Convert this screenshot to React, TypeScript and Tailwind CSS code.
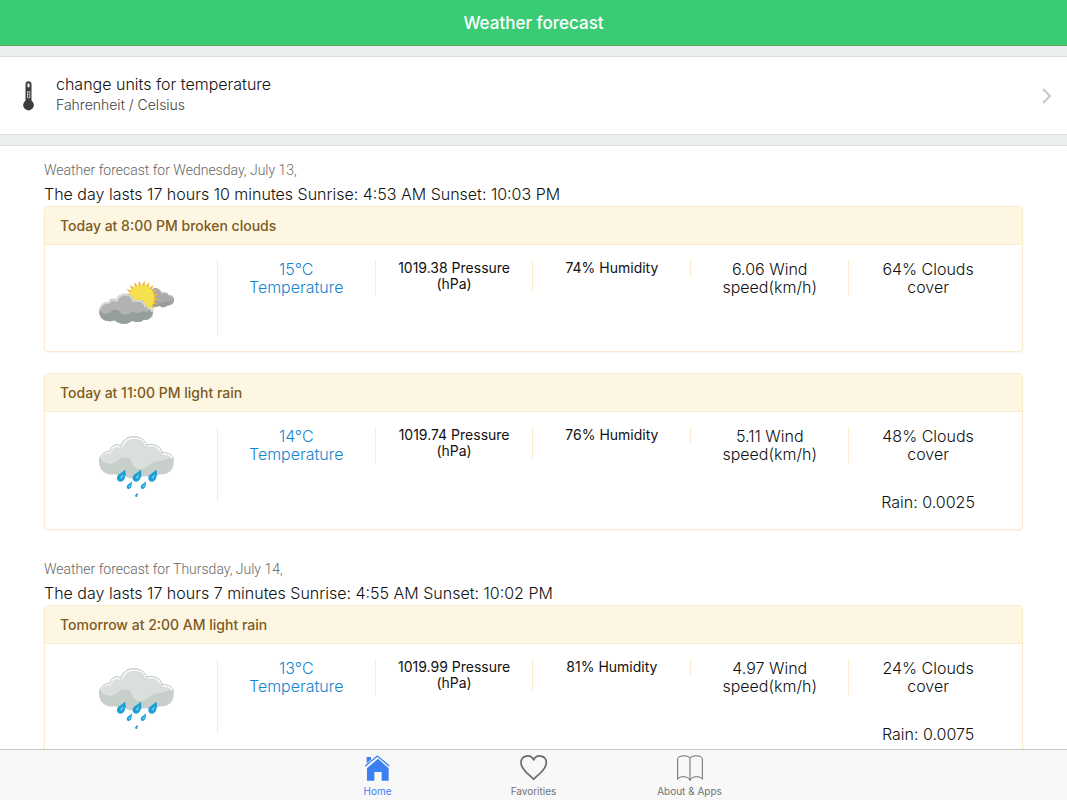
import type { ReactNode } from "react";

interface Forecast {
  title: string;
  icon: "sun" | "rain";
  temperature: string;
  pressure: string;
  humidity: string;
  wind: string;
  clouds: string;
  rain?: string;
}

interface Day {
  date: string;
  summary: string;
  forecasts: Forecast[];
}

const days: Day[] = [
  {
    date: "Wednesday, July 13,",
    summary: "The day lasts 17 hours 10 minutes Sunrise: 4:53 AM Sunset: 10:03 PM",
    forecasts: [
      {
        title: "Today at 8:00 PM broken clouds",
        icon: "sun",
        temperature: "15°C",
        pressure: "1019.38",
        humidity: "74%",
        wind: "6.06",
        clouds: "64%",
      },
      {
        title: "Today at 11:00 PM light rain",
        icon: "rain",
        temperature: "14°C",
        pressure: "1019.74",
        humidity: "76%",
        wind: "5.11",
        clouds: "48%",
        rain: "0.0025",
      },
    ],
  },
  {
    date: "Thursday, July 14,",
    summary: "The day lasts 17 hours 7 minutes Sunrise: 4:55 AM Sunset: 10:02 PM",
    forecasts: [
      {
        title: "Tomorrow at 2:00 AM light rain",
        icon: "rain",
        temperature: "13°C",
        pressure: "1019.99",
        humidity: "81%",
        wind: "4.97",
        clouds: "24%",
        rain: "0.0075",
      },
    ],
  },
];

// 21 pointed rays around the sun disc
const sunPoints = Array.from({ length: 42 }, (_, i) => {
  const r = i % 2 === 0 ? 53 : 36;
  const a = (i / 42) * Math.PI * 2 + 0.08;
  return `${(128 + Math.cos(a) * r).toFixed(1)},${(114 + Math.sin(a) * r).toFixed(1)}`;
}).join(" ");

function CloudySunIcon() {
  return (
    <svg viewBox="0 0 225 225" className="size-[75px]" aria-hidden="true">
      <path
        d="M158 90c4-7 17-8 24 0 3 3 5 6 5 9 8-5 18-2 23 6 10-2 16 6 15 16-1 11-10 16-19 15-7 8-18 7-23 1-9 5-23 5-31-4z"
        fill="#a9aaa9"
      />
      <path
        d="M150 122c8 9 19 0 23 2 5 7 17 6 25-1 8 5 21 3 26-6 2 11-7 19-18 19-7 8-18 7-23 1-9 5-23 5-31-4z"
        fill="#989e9b"
      />
      <path d="M184 92c3 3 4 6 4 9 8-5 18-2 22 6 7-1 12 3 14 8" fill="none" stroke="#c8cccb" strokeWidth="3" />
      <polygon points={sunPoints} fill="#f3b63e" />
      <circle cx="128" cy="114" r="38" fill="#f5e14d" />
      <path
        d="M1 157c-2-16 7-32 29-32 0-9 15-12 22-7 5-13 18-20 32-16 13 2 21 12 22 20 18-7 33 2 36 18 11-1 20 6 20 20 0 13-13 22-29 20-8 8-24 8-33 2-14 13-42 12-53-1-18 8-46 0-46-24z"
        fill="#b2b3b2"
      />
      <path
        d="M1 151c9 10 16 12 26 9 9-3 11-10 20-11 12-1 18 6 20 13 12 3 26 3 34-9 14 13 28 1 34 0 10 6 19 0 26-6 4 15-8 36-28 33-8 8-24 8-33 2-14 13-42 12-53-1-18 8-46 0-46-24z"
        fill="#949e9a"
      />
      <path
        d="M3 148c2-12 12-20 28-20 1-8 13-11 22-5 4-14 18-22 31-18 12 2 18 11 19 22M107 124c15-6 29 2 33 18M144 143c9 0 15 6 15 13"
        fill="none"
        stroke="#d8dedc"
        strokeWidth="5"
      />
    </svg>
  );
}

function RainIcon() {
  return (
    <svg viewBox="0 0 225 225" className="size-[75px]" aria-hidden="true">
      <path
        d="M1 112C-1 91 8 73 33 73 34 57 54 48 66 56 72 37 88 28 107 29c19 1 33 12 36 25 18-6 41 1 47 23 18-2 36 10 35 32-1 23-20 34-42 33-18 7-41 6-51 6-15 10-41 9-54-2-16 2-29-5-34-4C22 147 3 134 1 112z"
        fill="#dbdfdc"
      />
      <path
        d="M3 94c8 15 26 19 42 14 13-5 16-17 34-17 15 0 21 11 23 22 9 18 29 15 41 7 11-8 16-18 36-17 12-1 30-6 38-16 14 27-2 57-34 55-18 7-41 6-51 6-15 10-41 9-54-2-16 2-29-5-34-4C15 142-6 121 3 94z"
        fill="#c6cfca"
      />
      <path
        d="M4 91c3-11 17-16 29-15 2-16 18-22 31-16M70 60c5-19 20-28 37-27 17 0 30 10 35 24M146 57c16-4 32 1 39 17M190 80c14-1 24 5 30 14"
        fill="none"
        stroke="#fbfdfc"
        strokeWidth="5"
      />
      <path
        d="M1 105C2 85 12 74 33 73 34 57 54 48 66 56 72 37 88 28 107 29c19 1 33 12 36 25 18-6 41 1 47 23 18-2 34 8 35 25"
        fill="none"
        stroke="#bcc7c2"
        strokeWidth="3"
      />
      <g fill="#18a0d8">
        <path d="M98 163c2 8 0 23-9 23-5 0-7-6-5-10 3-5 9-6 14-13z" />
        <path d="M140 163c2 8 0 23-9 23-5 0-7-6-5-10 3-5 9-6 14-13z" />
        <path d="M116 197c1 5 0 13-4 13s-4-4-3-6c1-3 4-4 7-7z" />
      </g>
      <g fill="#18a0d8" stroke="#18a0d8" strokeWidth="4" strokeLinejoin="round">
        <path d="M77 131c3 11-1 31-13 31-7 0-10-7-7-14 3-7 13-8 20-17z" />
        <path d="M124 131c3 11-1 31-13 31-7 0-10-7-7-14 3-7 13-8 20-17z" />
        <path d="M171 131c3 11-1 31-13 31-7 0-10-7-7-14 3-7 13-8 20-17z" />
      </g>
      <g fill="#7cc9e8">
        <path d="M73 141c1 6-3 14-8 14-4-3 3-8 8-14z" />
        <path d="M120 141c1 6-3 14-8 14-4-3 3-8 8-14z" />
        <path d="M167 141c1 6-3 14-8 14-4-3 3-8 8-14z" />
        <path d="M95 171c1 4-2 10-6 10-2-3 2-6 6-10z" />
        <path d="M137 171c1 4-2 10-6 10-2-3 2-6 6-10z" />
      </g>
    </svg>
  );
}

function ThermometerIcon() {
  return (
    <svg viewBox="0 0 32 90" className="h-[30px] w-[11px]" aria-hidden="true">
      <path d="M7 10a9 9 0 0 1 18 0v49a16 16 0 1 1-18 0z" fill="#3d3d3f" />
      <path d="M13 9q3-5 6 0v10h-6z" fill="#fff" />
      <path d="M13 32h7v18h-7zM13 40h4" fill="none" stroke="#fff" strokeWidth="2" />
    </svg>
  );
}

function HomeIcon() {
  return (
    <svg viewBox="0 0 84 84" className="size-7" fill="#3b7ff2" aria-hidden="true">
      <path d="M8 9h13v13L8 32z" />
      <path d="M42 14 74 43v37H53V54H31v26H9V43z" />
      <path d="M4 36 40 6l36 30" fill="none" stroke="#f8f8f8" strokeWidth="8" />
      <path d="M4 36 40 6l36 30" fill="none" stroke="#3b7ff2" strokeWidth="4" />
    </svg>
  );
}

function HeartIcon() {
  return (
    <svg viewBox="0 0 84 84" className="size-7" aria-hidden="true">
      <path
        d="M41 76C35 66 3 50 3 26 3 3 33-1 41 18 49-1 79 3 79 26 79 50 47 66 41 76z"
        fill="none"
        stroke="#6a6a6a"
        strokeWidth="5"
        strokeLinejoin="round"
      />
    </svg>
  );
}

function BookIcon() {
  return (
    <svg viewBox="0 0 84 84" className="size-7" aria-hidden="true">
      <path
        d="M42 13C38 3 9 3 5 13v63c4-11 33-11 37 3 4-14 33-14 37-3V13C75 3 46 3 42 13zM42 13v66"
        fill="none"
        stroke="#6a6a6a"
        strokeWidth="3"
        strokeLinejoin="round"
      />
    </svg>
  );
}

function ForecastCard({ forecast }: { forecast: Forecast }) {
  return (
    <article className="overflow-hidden rounded border border-[#faebcc] bg-white shadow-xs">
      <h3 className="border-b border-[#faebcc] bg-[#fdf6e2] px-[15px] pt-[9px] pb-2 text-[14px] leading-5 font-medium text-[#7d5a1e]">
        {forecast.title}
      </h3>
      <div className="grid grid-cols-6 items-start px-[15px] pt-[15px] pb-4 text-center text-[16px] leading-[18px] font-light text-[#111]">
        <div className="flex justify-center border-r border-[#faebcc] pr-1">
          {forecast.icon === "sun" ? <CloudySunIcon /> : <RainIcon />}
        </div>
        <p className="border-r border-[#faebcc] text-[#1485d0]">
          {forecast.temperature}
          <br />
          Temperature
        </p>
        <p className="border-r border-[#faebcc] text-[14px] leading-4 font-normal">
          {forecast.pressure} Pressure
          <br />
          (hPa)
        </p>
        <p className="border-r border-[#faebcc] text-[14px] leading-4 font-normal">{forecast.humidity} Humidity</p>
        <p className="border-r border-[#faebcc]">
          {forecast.wind} Wind
          <br />
          speed(km/h)
        </p>
        <div>
          <p>
            {forecast.clouds} Clouds
            <br />
            cover
          </p>
          {forecast.rain && <p className="mt-[30px] mb-[2px]">Rain: {forecast.rain}</p>}
        </div>
      </div>
    </article>
  );
}

function Tab({ label, active, children }: { label: string; active?: boolean; children: ReactNode }) {
  return (
    <a
      href="#"
      aria-current={active ? "page" : undefined}
      className={`flex w-[156px] flex-col items-center pt-1 text-[10px] leading-4 ${active ? "text-[#3b7ff2]" : "text-[#727272]"}`}
    >
      {children}
      <span className="pt-px">{label}</span>
    </a>
  );
}

export default function App() {
  return (
    <div className="flex h-screen flex-col bg-white font-[Inter,'Liberation_Sans',sans-serif]">
      <header className="flex h-[46px] shrink-0 items-center justify-center border-b border-[#6f9c5c] bg-[#3acc74] pt-px">
        <h1 className="text-[17px] leading-6 font-medium text-white">Weather forecast</h1>
      </header>

      <main className="min-h-0 flex-1 overflow-y-auto [scrollbar-width:none]">
        <div className="border-b border-[#dcdcdc] bg-[#ebefef] py-[10px]">
          <a href="#" className="flex h-[79px] items-center border-y border-[#dcdcdc] bg-white pr-4 pl-[23px]">
            <ThermometerIcon />
            <span className="ml-[22px] flex-1 pb-1">
              <span className="block text-[16px] leading-[22px] font-light text-[#111]">change units for temperature</span>
              <span className="block text-[14px] leading-5 font-light text-[#444]">Fahrenheit / Celsius</span>
            </span>
            <svg viewBox="0 0 9 16" className="h-4 w-[9px]" aria-hidden="true">
              <path d="m1 1 7 7-7 7" fill="none" stroke="#c7c7cc" strokeWidth="2" />
            </svg>
          </a>
        </div>

        <div className="px-11 pt-3">
          {days.map((day) => (
            <section key={day.date} className="mb-[27px]">
              <h2 className="font-[Roboto,'Liberation_Sans',sans-serif] text-[14px] leading-6 font-light text-[#666]">
                Weather forecast for {day.date}
              </h2>
              <p className="text-[16px] leading-6 font-light text-[#111]">{day.summary}</p>
              <div className="flex flex-col gap-[21px]">
                {day.forecasts.map((forecast) => (
                  <ForecastCard key={forecast.title} forecast={forecast} />
                ))}
              </div>
            </section>
          ))}
        </div>
      </main>

      <nav className="flex h-[51px] shrink-0 justify-center border-t border-[#c4c4c4] bg-[#f8f8f8]">
        <Tab label="Home" active>
          <HomeIcon />
        </Tab>
        <Tab label="Favorities">
          <HeartIcon />
        </Tab>
        <Tab label="About &amp; Apps">
          <BookIcon />
        </Tab>
      </nav>
    </div>
  );
}
